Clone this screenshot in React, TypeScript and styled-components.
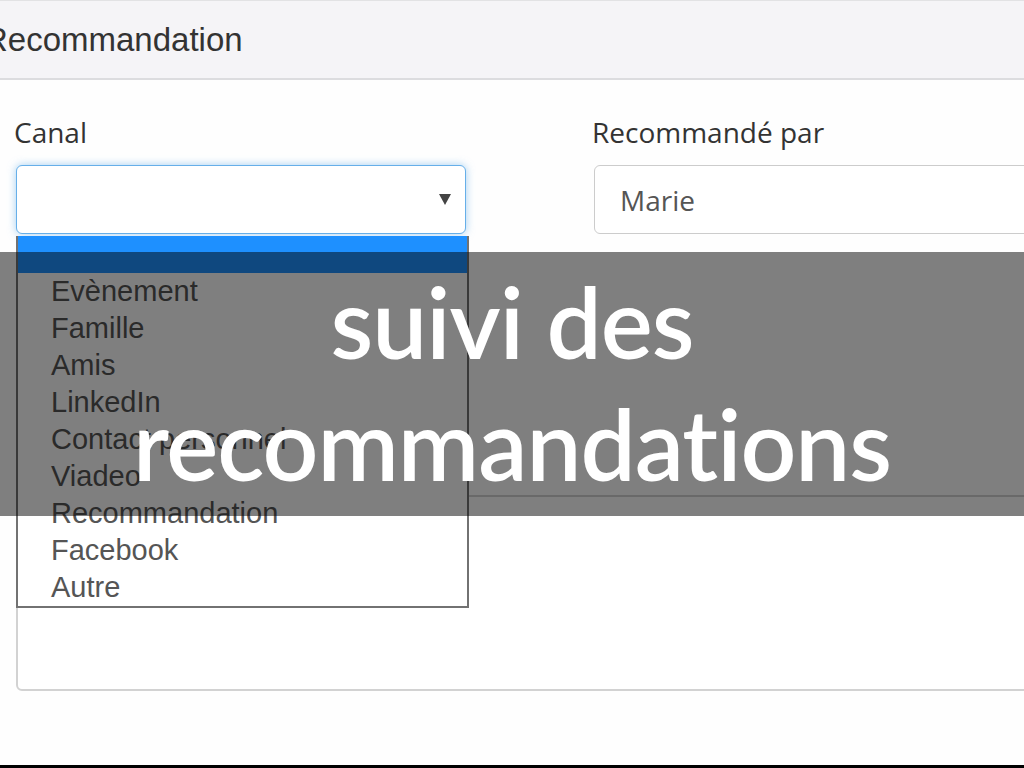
import React from 'react';
import styled, {createGlobalStyle} from "styled-components";

const GlobalStyle = createGlobalStyle`
  html, body {
    margin: 0;
    padding: 0;
    background: #fefefe;
    overflow: hidden;
  }
`

const Page = styled.div`
  position: relative;
  width: 1024px;
  height: 768px;
  overflow: hidden;
  background: #fefefe;
  box-sizing: border-box;
  border-top: 1px solid #e2e2e4;
  border-bottom: 3px solid #000;
`

const PanelHeading = styled.div`
  height: 77px;
  display: flex;
  align-items: center;
  background: #f5f4f7;
  border-bottom: 2px solid #dcdcdf;
`

const PanelTitle = styled.h3`
  margin: 0 0 0 -16px;
  font-family: "Liberation Sans", Arial, sans-serif;
  font-weight: normal;
  font-size: 33px;
  color: #333;
`

const PanelBody = styled.div`
  padding: 32px 0 0 16px;
`

const FormRow = styled.div`
  display: flex;
  gap: 128px;
`

const FormGroup = styled.div<{ $width: number }>`
  position: relative;
  flex: 0 0 ${p => p.$width}px;
`

const Label = styled.label`
  display: block;
  margin-left: -2px;
  font-family: "Open Sans", sans-serif;
  font-size: 28px;
  line-height: 40px;
  color: #333;
  margin-bottom: 13px;
`

const SelectBox = styled.div`
  box-sizing: border-box;
  height: 69px;
  border: 1px solid #66afe9;
  border-radius: 6px;
  box-shadow: 0 0 8px rgba(102, 175, 233, 0.6);
  background: #fff;
  display: flex;
  align-items: center;
  justify-content: flex-end;
  padding-right: 14px;
`

const Caret = styled.span`
  width: 0;
  height: 0;
  border-left: 6px solid transparent;
  border-right: 6px solid transparent;
  border-top: 11px solid #444;
`

const Input = styled.div`
  box-sizing: border-box;
  width: 520px;
  height: 69px;
  border: 1px solid #ccc;
  border-radius: 6px;
  background: #fff;
  display: flex;
  align-items: center;
  padding-left: 25px;
  font-family: "Open Sans", sans-serif;
  font-size: 28px;
  color: #555;
`

const OptionList = styled.ul`
  position: absolute;
  top: 124px;
  left: 0;
  width: 453px;
  box-sizing: border-box;
  margin: 0;
  padding: 0;
  list-style: none;
  background: #fff;
  border: 2px solid #727272;
  border-top: none;
  z-index: 2;
`

const Option = styled.li<{ $active?: boolean }>`
  height: 37px;
  padding-left: 33px;
  font-family: "Liberation Sans", Arial, sans-serif;
  font-size: 29px;
  line-height: 37px;
  color: ${p => p.$active ? '#fff' : '#555'};
  background: ${p => p.$active ? '#1e90ff' : 'transparent'};
`

const TextArea = styled.div`
  box-sizing: border-box;
  margin-top: 261px;
  width: 1100px;
  height: 196px;
  border: 2px solid #d2d2d2;
  border-radius: 6px;
  background: #fff;
`

const Banner = styled.div`
  position: absolute;
  top: 251px;
  left: 0;
  right: 0;
  height: 264px;
  background: rgba(0, 0, 0, 0.5);
  z-index: 3;
  padding-top: 8px;
  box-sizing: border-box;
`

const BannerTitle = styled.h1`
  margin: 0;
  text-align: center;
  font-family: Lato, "Noto Sans", sans-serif;
  font-weight: 600;
  font-size: 98px;
  line-height: 122px;
  letter-spacing: -1px;
  color: #fff;
`

const options = [
    'Evènement',
    'Famille',
    'Amis',
    'LinkedIn',
    'Contact personnel',
    'Viadeo',
    'Recommandation',
    'Facebook',
    'Autre',
]

const App: React.FC = () => {
    return (
        <Page>
            <GlobalStyle/>
            <PanelHeading>
                <PanelTitle>Recommandation</PanelTitle>
            </PanelHeading>
            <PanelBody>
                <FormRow>
                    <FormGroup $width={450}>
                        <Label>Canal</Label>
                        <SelectBox>
                            <Caret/>
                        </SelectBox>
                        <OptionList>
                            <Option $active>&nbsp;</Option>
                            {options.map(o => (
                                <Option key={o}>{o}</Option>
                            ))}
                        </OptionList>
                    </FormGroup>
                    <FormGroup $width={520}>
                        <Label>Recommandé par</Label>
                        <Input>Marie</Input>
                    </FormGroup>
                </FormRow>
                <TextArea/>
            </PanelBody>
            <Banner>
                <BannerTitle>
                    suivi des<br/>recommandations
                </BannerTitle>
            </Banner>
        </Page>
    );
}

export default App;
